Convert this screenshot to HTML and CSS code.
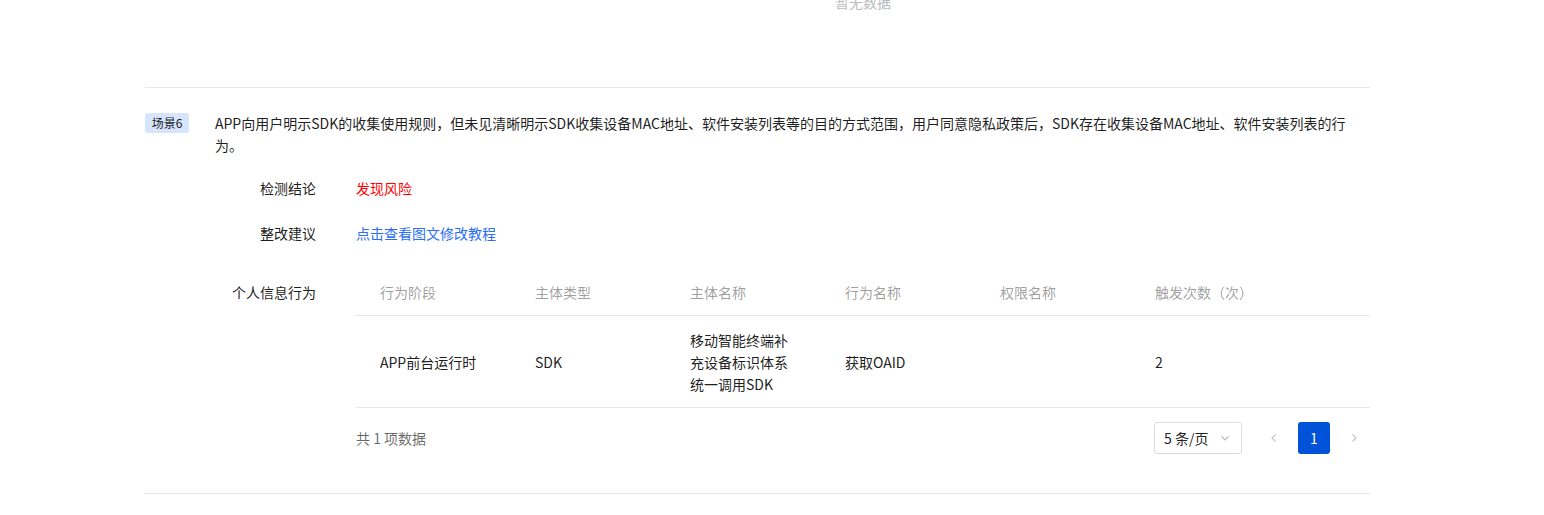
FILE: index.html
```html
<!DOCTYPE html>
<html lang="zh-CN">
<head>
<meta charset="utf-8">
<title>检测结果</title>
<link rel="stylesheet" href="styles.css">
</head>
<body>
<div class="page">
  <div class="prev-item">
    <div class="empty">暂无数据</div>
  </div>

  <div class="scene">
    <div class="scene-head">
      <span class="badge">场景6</span>
      <p class="desc">APP向用户明示SDK的收集使用规则，但未见清晰明示SDK收集设备MAC地址、软件安装列表等的目的方式范围，用户同意隐私政策后，SDK存在收集设备MAC地址、软件安装列表的行为。</p>
    </div>

    <div class="form">
      <div class="form-row">
        <div class="label">检测结论</div>
        <div class="value risk">发现风险</div>
      </div>
      <div class="form-row">
        <div class="label">整改建议</div>
        <div class="value"><a class="link" href="#">点击查看图文修改教程</a></div>
      </div>
      <div class="form-row table-row">
        <div class="label label-table">个人信息行为</div>
        <div class="value">
          <table class="tbl">
            <colgroup>
              <col class="c"><col class="c"><col class="c"><col class="c"><col class="c"><col>
            </colgroup>
            <thead>
              <tr>
                <th>行为阶段</th>
                <th>主体类型</th>
                <th>主体名称</th>
                <th>行为名称</th>
                <th>权限名称</th>
                <th>触发次数（次）</th>
              </tr>
            </thead>
            <tbody>
              <tr>
                <td>APP前台运行时</td>
                <td>SDK</td>
                <td>移动智能终端补充设备标识体系统一调用SDK</td>
                <td>获取OAID</td>
                <td></td>
                <td>2</td>
              </tr>
            </tbody>
          </table>
          <div class="pager">
            <span class="total">共 1 项数据</span>
            <div class="pager-right">
              <div class="select">
                <span>5 条/页</span>
                <svg class="chev" width="12" height="12" viewBox="0 0 12 12"><polyline points="2.5,4.5 6,8 9.5,4.5" fill="none" stroke="#bbbbbb" stroke-width="1.2"/></svg>
              </div>
              <button class="pg-btn arrow" type="button" aria-label="上一页">
                <svg width="12" height="12" viewBox="0 0 12 12"><polyline points="7.5,2.5 4,6 7.5,9.5" fill="none" stroke="#c5c5c5" stroke-width="1.2"/></svg>
              </button>
              <button class="pg-btn current" type="button">1</button>
              <button class="pg-btn arrow" type="button" aria-label="下一页">
                <svg width="12" height="12" viewBox="0 0 12 12"><polyline points="4.5,2.5 8,6 4.5,9.5" fill="none" stroke="#c5c5c5" stroke-width="1.2"/></svg>
              </button>
            </div>
          </div>
        </div>
      </div>
    </div>
  </div>
</div>
</body>
</html>
```

FILE: styles.css
```css
* { box-sizing: border-box; }

html, body {
  margin: 0;
  padding: 0;
  background: #ffffff;
}

body {
  font-family: "Noto Sans CJK SC", "Noto Sans", sans-serif;
  font-size: 14px;
  line-height: 22px;
  color: rgba(0, 0, 0, 0.9);
}

.page {
  width: 1225px;
  margin-left: 145px;
}

.prev-item {
  display: flow-root;
  height: 88px;
  border-bottom: 1px solid #e7e7e7;
}

.empty {
  margin-left: 211px;
  margin-top: -9px;
  text-align: center;
  color: #bbbbbb;
}

.scene {
  padding-top: 24px;
  padding-bottom: 39px;
  border-bottom: 1px solid #e7e7e7;
}

.scene-head {
  display: flex;
  align-items: flex-start;
}

.badge {
  flex: 0 0 auto;
  width: 44px;
  height: 20px;
  margin-top: 1px;
  margin-right: 26px;
  border-radius: 3px;
  background: #d6e4fc;
  font-size: 12px;
  line-height: 20px;
  text-align: center;
  color: rgba(0, 0, 0, 0.9);
}

.desc {
  margin: 0;
  flex: 1 1 auto;
}

.form {
  margin-top: 21px;
  display: flex;
  flex-direction: column;
  gap: 23px;
}

.form-row {
  display: grid;
  grid-template-columns: 171px 1fr;
  column-gap: 40px;
}

.table-row {
  margin-top: 1px;
}

.label {
  text-align: right;
}

.label-table {
  padding-top: 13px;
}

.risk {
  color: #ff0000;
}

.link {
  color: #2a6ef6;
  text-decoration: none;
}

.tbl {
  width: 100%;
  border-collapse: collapse;
  table-layout: fixed;
}

.tbl col.c {
  width: 155px;
}

.tbl th {
  text-align: left;
  font-weight: normal;
  color: rgba(0, 0, 0, 0.4);
  padding: 13px 24px 12px;
  border-bottom: 1px solid #e7e7e7;
}

.tbl td {
  padding: 13px 24px 12px;
  border-bottom: 1px solid #e7e7e7;
  vertical-align: middle;
}

.pager {
  display: flex;
  align-items: center;
  justify-content: space-between;
  padding-top: 14px;
}

.total {
  color: rgba(0, 0, 0, 0.6);
}

.pager-right {
  display: flex;
  align-items: center;
  gap: 8px;
}

.select {
  width: 88px;
  height: 32px;
  border: 1px solid #dcdcdc;
  border-radius: 3px;
  display: flex;
  align-items: center;
  justify-content: space-between;
  padding: 0 10px 0 9px;
  margin-right: 8px;
}

.chev {
  display: block;
}

.pg-btn {
  width: 32px;
  height: 32px;
  border: 0;
  border-radius: 3px;
  background: transparent;
  padding: 0;
  font-family: inherit;
  font-size: 14px;
  display: flex;
  align-items: center;
  justify-content: center;
}

.pg-btn.current {
  background: #0052d9;
  color: #ffffff;
}
```
